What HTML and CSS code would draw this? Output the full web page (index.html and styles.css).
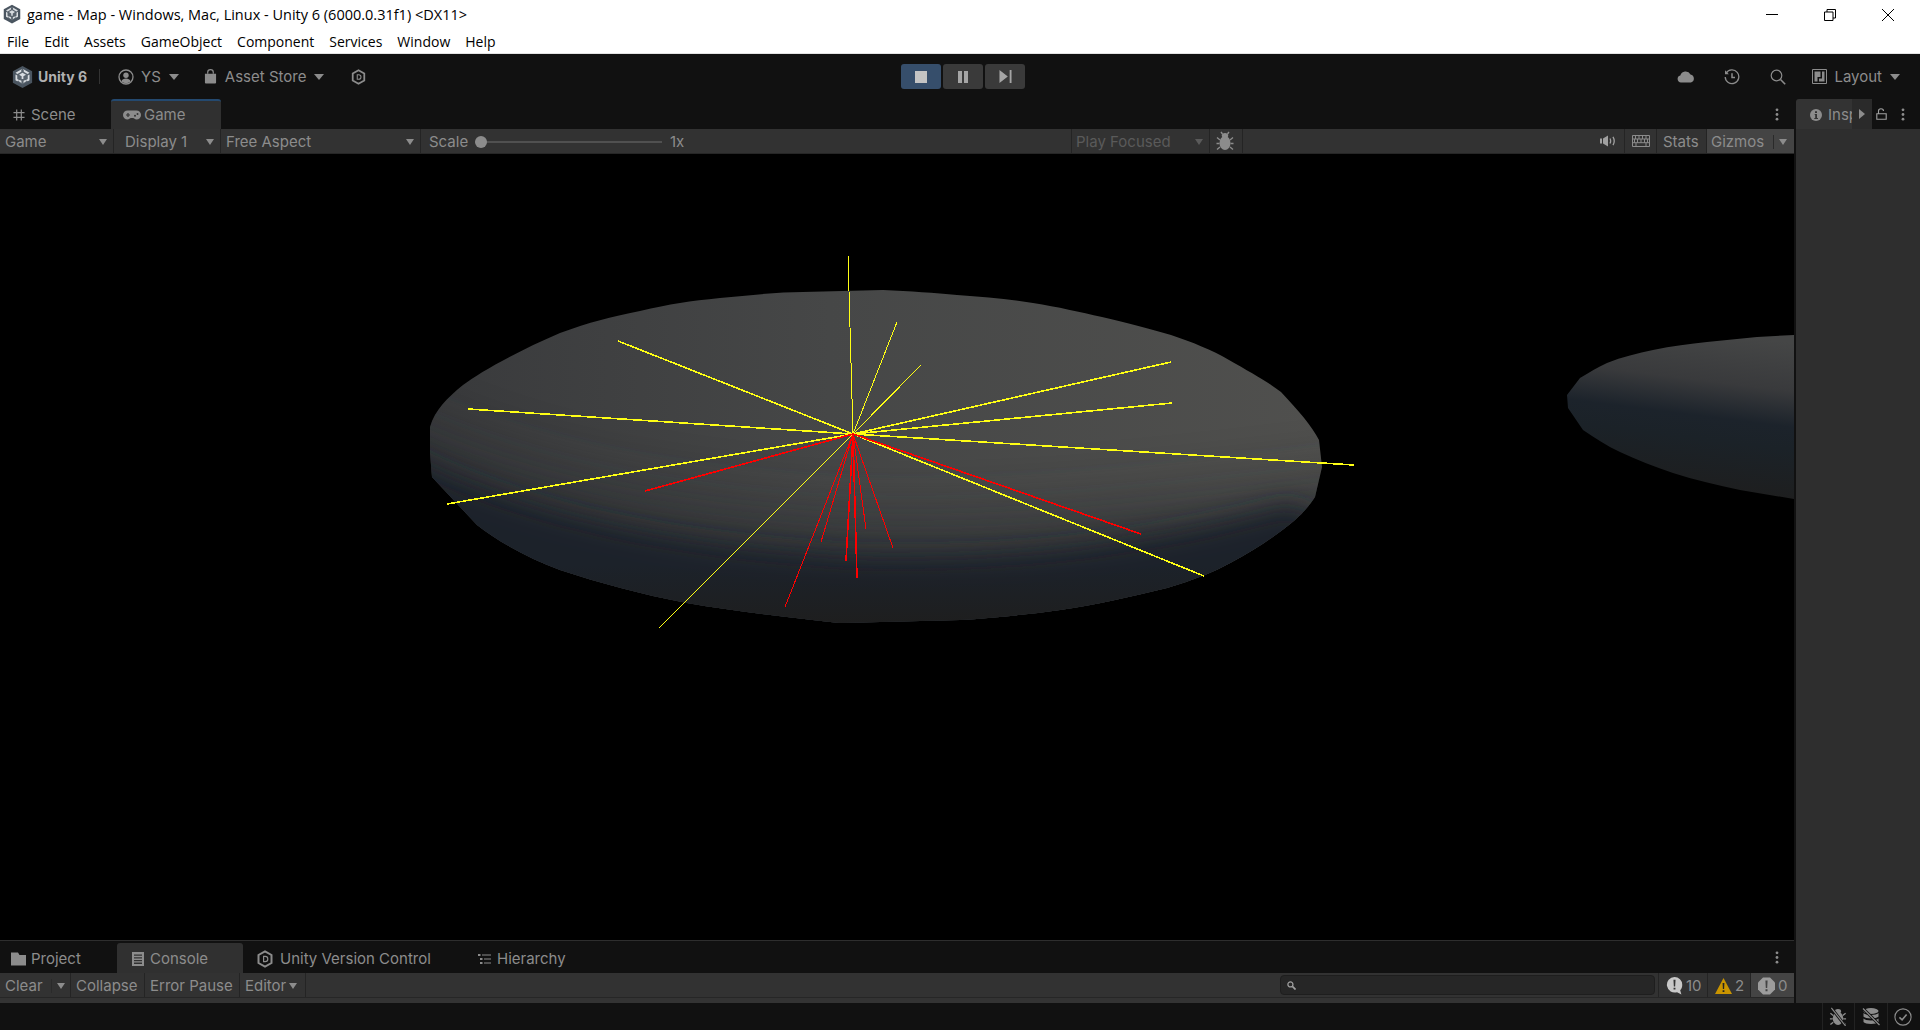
FILE: index.html
```html
<!DOCTYPE html>
<html lang="en">
<head>
  <meta charset="UTF-8" />
  <title>game - Map - Unity 6</title>
  <link rel="stylesheet" href="styles.css">
</head>
<body>
  <svg class="defs" width="0" height="0">
    <symbol id="i-unity" viewBox="0 0 24 26">
      <path d="M12 0.500 23 6.500V19.500L12 25.500 1 19.500V6.500Z" fill="#4a5560"/>
      <path d="M12 4.500 19.500 8.800V17.200L12 21.500 4.500 17.200V8.800Z" fill="#59636d"/>
      <path d="M12 3.500 20 8.200 17.800 9.600 13.400 7V4.900ZM12 3.500 4 8.200 6.200 9.600 10.600 7V4.900ZM4 10 6 11.200V15.300L8 16.500 6 17.800 4 16.600ZM20 10 18 11.200V15.300L16 16.500 18 17.800 20 16.600ZM10.800 19.700V17.400L8.800 16.300 7 17.400 12 20.800 17 17.400 15.200 16.300 13.200 17.400V19.700L12 21Z M8 10.300 12 8 16 10.300 13 12.200V15.200H11V12.200Z" fill="#d9dde1"/>
    </symbol>
    <symbol id="i-user" viewBox="0 0 16 16">
      <circle cx="8" cy="8" r="7" fill="none" stroke="currentColor" stroke-width="1.300"/>
      <circle cx="8" cy="6.200" r="2.700" fill="currentColor"/>
      <path d="M3.400 12.600C4 10.300 6 9.600 8 9.600S12 10.300 12.600 12.600A7 7 0 0 1 3.400 12.600Z" fill="currentColor"/>
    </symbol>
    <symbol id="i-bag" viewBox="0 0 14 16">
      <path d="M1 5H13V14.500A1 1 0 0 1 12 15.500H2A1 1 0 0 1 1 14.500Z" fill="currentColor"/>
      <path d="M4 5V3.300A3 2.600 0 0 1 10 3.300V5" fill="none" stroke="currentColor" stroke-width="1.300"/>
    </symbol>
    <symbol id="i-hexd" viewBox="0 0 16 18">
      <path d="M8 1.300 14.500 5V13L8 16.700 1.500 13V5Z" fill="none" stroke="currentColor" stroke-width="2"/>
      <path fill-rule="evenodd" d="M6 5.800H8.200A3.200 3.200 0 0 1 8.200 12.200H6ZM7.200 7V11H8.200A2 2 0 0 0 8.200 7Z" fill="currentColor"/>
    </symbol>
    <symbol id="i-grid" viewBox="0 0 13 13">
      <path d="M4 0.500V12.500M9 0.500V12.500M0.500 4H12.500M0.500 9H12.500" fill="none" stroke="currentColor" stroke-width="1.300"/>
    </symbol>
    <symbol id="i-pad" viewBox="0 0 18 10">
      <path d="M4.500 0.500H13.500A4.500 4.500 0 0 1 13.500 9.500C11.800 9.500 11.300 8 10 8H8C6.700 8 6.200 9.500 4.500 9.500A4.500 4.500 0 0 1 4.500 0.500Z" fill="currentColor"/>
      <path d="M3 5H7M5 3V7" stroke="#333" stroke-width="1.200"/>
      <circle cx="12" cy="5.800" r="1" fill="#333"/><circle cx="14.500" cy="4" r="1" fill="#333"/>
    </symbol>
    <symbol id="i-bug" viewBox="0 0 18 20">
      <ellipse cx="9" cy="12" rx="5.500" ry="7" fill="currentColor"/>
      <ellipse cx="9" cy="4.500" rx="3.200" ry="2.500" fill="currentColor"/>
      <path d="M4 9 1 6.500M14 9 17 6.500M3.500 12.500H0.500M14.500 12.500H17.500M4 16 1 18.500M14 16 17 18.500M6.500 3 5 1M11.500 3 13 1" stroke="currentColor" stroke-width="1.400" fill="none"/>
    </symbol>
    <symbol id="i-cloud" viewBox="0 0 18 13">
      <path d="M4 12.500A3.500 3.500 0 0 1 3.300 5.600 5.500 5.500 0 0 1 13.500 4.400 4.200 4.200 0 0 1 14 12.500Z" fill="currentColor"/>
    </symbol>
    <symbol id="i-history" viewBox="0 0 16 16">
      <path d="M2.200 4.200A6.800 6.800 0 1 1 1.200 8" fill="none" stroke="currentColor" stroke-width="1.300"/>
      <path d="M1 1.300V5.200H4.900Z" fill="currentColor"/>
      <path d="M8 4.200V8.400H11" fill="none" stroke="currentColor" stroke-width="1.500"/>
    </symbol>
    <symbol id="i-search" viewBox="0 0 16 16">
      <circle cx="6.500" cy="6.500" r="5.300" fill="none" stroke="currentColor" stroke-width="1.200"/>
      <path d="M10.500 10.500 15.200 15.200" stroke="currentColor" stroke-width="1.600"/>
    </symbol>
    <symbol id="i-layout" viewBox="0 0 15 15">
      <path d="M0.500 0.500H14.500V14.500H0.500Z" fill="none" stroke="currentColor"/>
      <path d="M2.500 2.500H8.500V8H5.500V12.500H2.500ZM10 2.500H12.500V12.500H7V9.500H10Z" fill="currentColor"/>
    </symbol>
    <symbol id="i-dots" viewBox="0 0 4 14">
      <circle cx="2" cy="2" r="1.500" fill="currentColor"/><circle cx="2" cy="7" r="1.500" fill="currentColor"/><circle cx="2" cy="12" r="1.500" fill="currentColor"/>
    </symbol>
    <symbol id="i-info" viewBox="0 0 12 12">
      <circle cx="6" cy="6" r="6" fill="currentColor"/>
      <path d="M5 2.200H7V4H5ZM4.700 5H7V9H8V10H4.300V9H5.200V6H4.700Z" fill="#333"/>
    </symbol>
    <symbol id="i-lock" viewBox="0 0 11 12">
      <path d="M0.800 5.800H10.200V11.300H0.800ZM2.500 5.800V3A2.500 2.300 0 0 1 7.500 3" fill="none" stroke="currentColor" stroke-width="1.100"/>
    </symbol>
    <symbol id="i-speaker" viewBox="0 0 16 12">
      <path d="M0 3.500H2V8.500H0ZM3 3.500 8 0.500V11.500L3 8.500Z" fill="currentColor"/>
      <path d="M10 3.500Q11.300 6 10 8.500M13 1.800Q15.500 6 13 10.200" fill="none" stroke="currentColor" stroke-width="1.300"/>
    </symbol>
    <symbol id="i-keys" viewBox="0 0 18 12">
      <path d="M0.500 0.500H17.500V11.500H0.500ZM0.500 4H17.500M0.500 7.700H17.500M3.500 0.500V4M7 0.500V4M10.500 0.500V4M14 0.500V4M2.500 4V7.700M5.500 4V7.700M9 4V7.700M12.500 4V7.700M15.500 4V7.700M4 7.700V11.500M14 7.700V11.500" fill="none" stroke="currentColor" stroke-width="1"/>
    </symbol>
    <symbol id="i-folder" viewBox="0 0 15 14">
      <path d="M0 0.500H7L8.500 3H15V13.500H0Z" fill="currentColor"/>
    </symbol>
    <symbol id="i-doc" viewBox="0 0 12 14">
      <path fill-rule="evenodd" d="M0 0H12V14H0ZM2 2.500V3.800H10V2.500ZM2 5.200V6.500H10V5.200ZM2 7.900V9.200H10V7.900ZM2 10.600V11.900H10V10.600Z" fill="currentColor"/>
    </symbol>
    <symbol id="i-tree" viewBox="0 0 13 12">
      <path d="M0 1H2.500V3H0ZM4 1.500H13V2.500H4ZM2 5H4.500V7H2ZM6 5.500H13V6.500H6ZM2 9H4.500V11H2ZM6 9.500H13V10.500H6Z" fill="currentColor"/>
    </symbol>
    <symbol id="i-magnify" viewBox="0 0 10 10">
      <circle cx="3.800" cy="3.800" r="2.800" fill="none" stroke="currentColor" stroke-width="1.400"/>
      <path d="M6 6 9.500 9.500" stroke="currentColor" stroke-width="1.800"/>
    </symbol>
    <symbol id="i-msg" viewBox="0 0 17 19">
      <path d="M8.500 0A8.200 8.200 0 0 1 16.700 8.200C16.700 10.800 15.800 12.800 14.500 14.100L15.800 18.500 11.200 16A8.200 8.200 0 1 1 8.500 0Z" fill="#c8c8c8"/>
      <path d="M7.400 3H9.600L9.200 10H7.800ZM7.500 11.300H9.500V13.300H7.500Z" fill="#333"/>
    </symbol>
    <symbol id="i-warn" viewBox="0 0 17 16">
      <path d="M8.500 0 17 16H0Z" fill="#c99400"/>
      <path d="M7.600 5H9.400L9.100 11H7.900ZM7.600 12.200H9.400V14H7.600Z" fill="#222"/>
    </symbol>
    <symbol id="i-err" viewBox="0 0 17 17">
      <path d="M5 0H12L17 5V12L12 17H5L0 12V5Z" fill="#9c9c9c"/>
      <path d="M7.400 3H9.600L9.200 10.500H7.800ZM7.500 11.800H9.500V13.800H7.500Z" fill="#444"/>
    </symbol>
    <symbol id="i-bugoff" viewBox="0 0 18 20">
      <ellipse cx="9" cy="12" rx="5.500" ry="7" fill="currentColor"/>
      <ellipse cx="9" cy="4.500" rx="3.200" ry="2.500" fill="currentColor"/>
      <path d="M4 9 1 6.500M14 9 17 6.500M3.500 12.500H0.500M14.500 12.500H17.500M4 16 1 18.500M14 16 17 18.500" stroke="currentColor" stroke-width="1.400" fill="none"/>
      <path d="M2 1 16 19" stroke="#111" stroke-width="3"/><path d="M2 1 17 20" stroke="currentColor" stroke-width="1.200"/>
    </symbol>
    <symbol id="i-db" viewBox="0 0 18 18">
      <ellipse cx="9" cy="3.500" rx="7.500" ry="3" fill="currentColor"/>
      <path d="M1.500 5.500C3 8 15 8 16.500 5.500V9C15 11.500 3 11.500 1.500 9ZM1.500 11C3 13.500 15 13.500 16.500 11V14.500C15 17 3 17 1.500 14.500Z" fill="currentColor"/>
      <path d="M1 1 17 17" stroke="#111" stroke-width="3"/><path d="M1 1 17.500 17.500" stroke="currentColor" stroke-width="1.200"/>
    </symbol>
    <symbol id="i-check" viewBox="0 0 16 16">
      <circle cx="8" cy="8" r="7.200" fill="none" stroke="currentColor" stroke-width="1"/>
      <path d="M4.800 8.300 7.200 10.500 11.200 5.800" fill="none" stroke="currentColor" stroke-width="1.400"/>
    </symbol>
  </svg>

  <div class="window">
    <header class="titlebar">
      <div class="title-row">
        <svg class="app-icon"><use href="#i-unity"/></svg>
        <span class="title-text">game - Map - Windows, Mac, Linux - Unity 6 (6000.0.31f1) &lt;DX11&gt;</span>
        <div class="win-controls">
          <svg class="win-btn" viewBox="0 0 12 12"><path d="M0 5.500H12" stroke="#000" fill="none"/></svg>
          <svg class="win-btn" viewBox="0 0 12 12"><path d="M0.500 3H9V11.500H0.500ZM3 3V0.500H11.500V9H9" stroke="#000" fill="none"/></svg>
          <svg class="win-btn" viewBox="0 0 12 12"><path d="M0 0 12 12M12 0 0 12" stroke="#000" fill="none"/></svg>
        </div>
      </div>
      <nav class="menu-row">
        <span>File</span><span>Edit</span><span>Assets</span><span>GameObject</span><span>Component</span><span>Services</span><span>Window</span><span>Help</span>
      </nav>
    </header>

    <div class="maintoolbar">
      <div class="mt-left">
        <svg class="mt-logo"><use href="#i-unity"/></svg>
        <span class="mt-brand">Unity 6</span>
        <span class="mt-sep"></span>
        <svg class="mt-user"><use href="#i-user"/></svg>
        <span class="mt-ys">YS</span>
        <i class="arrow mt-arrow"></i>
        <svg class="mt-bag"><use href="#i-bag"/></svg>
        <span class="mt-store">Asset Store</span>
        <i class="arrow mt-arrow"></i>
        <svg class="mt-hex"><use href="#i-hexd"/></svg>
      </div>
      <div class="play-group">
        <button class="play-btn active"><b class="ic-stop"></b></button>
        <button class="play-btn"><b class="ic-pause"></b></button>
        <button class="play-btn"><svg class="ic-step" viewBox="0 0 13 14"><path d="M0 0 9 7 0 14ZM11 0H13V14H11Z" fill="currentColor"/></svg></button>
      </div>
      <div class="mt-right">
        <svg class="mt-cloud"><use href="#i-cloud"/></svg>
        <svg class="mt-history"><use href="#i-history"/></svg>
        <svg class="mt-search"><use href="#i-search"/></svg>
        <svg class="mt-layout"><use href="#i-layout"/></svg>
        <span class="mt-layout-text">Layout</span>
        <i class="arrow mt-arrow"></i>
      </div>
    </div>

    <div class="workspace">
      <div class="left-col">
        <div class="tabbar">
          <div class="tab scene-tab"><svg class="tab-ic13"><use href="#i-grid"/></svg>Scene</div>
          <div class="tab tab-active game-tab"><svg class="tab-pad"><use href="#i-pad"/></svg>Game</div>
          <svg class="tab-dots"><use href="#i-dots"/></svg>
        </div>

        <div class="toolbar">
          <div class="cell c-game">Game<i class="arrow"></i></div>
          <div class="cell c-display"><span class="indent">Display 1</span><i class="arrow"></i></div>
          <div class="cell c-aspect">Free Aspect<i class="arrow"></i></div>
          <div class="scale-cell">
            <span class="scale-label">Scale</span>
            <div class="slider"><b class="thumb"></b></div>
            <span class="scale-value">1x</span>
          </div>
          <div class="cell faded">Play Focused<i class="arrow"></i></div>
          <div class="cell icon-cell c-bug"><svg class="ic-bug"><use href="#i-bug"/></svg></div>
          <div class="fill"></div>
          <div class="cell icon-cell c-icon"><svg class="ic-speaker"><use href="#i-speaker"/></svg></div>
          <div class="cell icon-cell c-icon"><svg class="ic-keys"><use href="#i-keys"/></svg></div>
          <div class="cell c-stats">Stats</div>
          <div class="gizmos">Gizmos<span class="gizmo-sep"></span><i class="arrow"></i></div>
        </div>

        <div class="gameview">
          <svg class="scene" width="1794" height="786" viewBox="0 154 1794 786">
            <defs>
              <linearGradient id="top-light" x1="0" y1="0" x2="1" y2="0">
                <stop offset="0" stop-color="#393a3c"/>
                <stop offset="0.45" stop-color="#464747"/>
                <stop offset="1" stop-color="#50504e"/>
              </linearGradient>
              <linearGradient id="bottom-grey" x1="0" y1="0" x2="0" y2="1">
                <stop offset="0" stop-color="#1e1e1e" stop-opacity="0"/>
                <stop offset="1" stop-color="#1e1e1e"/>
              </linearGradient>
              <linearGradient id="side-band" gradientUnits="userSpaceOnUse" x1="1690" y1="330" x2="1670" y2="490">
                <stop offset="0" stop-color="#454646"/>
                <stop offset="0.3" stop-color="#393a3c"/>
                <stop offset="0.52" stop-color="#1c232b"/>
                <stop offset="0.66" stop-color="#1b2228"/>
                <stop offset="1" stop-color="#1e1e1e"/>
              </linearGradient>
              <clipPath id="disc-a"><path d="M430 427C435 410 447 398 463 385 480 372 520 350 560 333 590 322 610 317 640 311 670 304 690 301 720 298 750 295 780 292 803 292L883 290C910 291 935 293 957 295 985 297 1010 299 1033 303 1058 307 1080 312 1102 317 1128 323 1150 329 1171 335 1192 342 1212 350 1229 360 1250 372 1268 382 1281 392 1298 410 1312 426 1319 440L1322 467 1315 497C1310 505 1303 513 1295 520 1283 530 1268 541 1253 550 1238 559 1222 568 1205 575 1192 580 1180 584 1167 588 1130 597 1095 605 1060 610 1025 615 990 618 960 620L840 623C820 621 805 619 787 617 755 613 720 609 687 603 640 594 600 583 560 570 530 559 500 543 477 525L432 477 430 453Z"/></clipPath>
              <clipPath id="disc-b"><path d="M1567 395 1580 378C1590 372 1598 367 1607 363 1622 357 1638 353 1653 350 1672 346 1690 344 1707 342L1757 337 1794 335V499L1740 490C1717 485 1695 480 1673 473 1655 467 1637 460 1620 452 1607 446 1595 438 1583 430L1568 408Z"/></clipPath>
              <filter id="blur-xl" filterUnits="userSpaceOnUse" x="300" y="200" width="1200" height="600"><feGaussianBlur stdDeviation="32"/></filter>
              <filter id="blur-lg" filterUnits="userSpaceOnUse" x="300" y="200" width="1200" height="600"><feGaussianBlur stdDeviation="13"/></filter>
            </defs>

            <g clip-path="url(#disc-a)">
              <rect x="420" y="285" width="910" height="345" fill="url(#top-light)"/>
              <path d="M350 400C500 480 660 510 850 520 1040 525 1180 505 1400 480V720H350Z" fill="#2c2e32" opacity="0.75" filter="url(#blur-xl)"/>
              <path d="M380 440C500 510 660 545 850 556 1040 562 1180 535 1290 505L1400 560V700H380Z" fill="#1c232b" filter="url(#blur-lg)"/>
              <rect x="420" y="565" width="910" height="60" fill="url(#bottom-grey)"/>
            </g>

            <g clip-path="url(#disc-b)">
              <rect x="1560" y="330" width="240" height="175" fill="url(#side-band)"/>
            </g>

            <g class="rays-yellow">
              <line class="ray-thin" x1="853" y1="434" x2="848" y2="255"/>
              <line class="ray-thin" x1="853" y1="434" x2="897" y2="322"/>
              <line class="ray-thin" x1="853" y1="434" x2="921" y2="365"/>
              <line x1="853" y1="434" x2="1171" y2="362"/>
              <line x1="853" y1="434" x2="1172" y2="403"/>
              <line x1="853" y1="434" x2="1354" y2="465"/>
              <line x1="853" y1="434" x2="1204" y2="576"/>
              <line x1="853" y1="434" x2="618" y2="341"/>
              <line x1="853" y1="434" x2="468" y2="409"/>
              <line x1="853" y1="434" x2="447" y2="504"/>
              <line class="ray-thin" x1="853" y1="434" x2="659" y2="628"/>
            </g>
            <g class="rays-red">
              <line x1="853" y1="434" x2="645" y2="491"/>
              <line class="ray-thin" x1="853" y1="434" x2="785" y2="607"/>
              <line class="ray-thin" x1="853" y1="434" x2="821" y2="542"/>
              <line x1="853" y1="434" x2="846" y2="561"/>
              <line x1="853" y1="434" x2="857" y2="578"/>
              <line class="ray-thin" x1="853" y1="434" x2="866" y2="529"/>
              <line class="ray-thin" x1="853" y1="434" x2="893" y2="548"/>
              <line x1="853" y1="434" x2="1141" y2="534"/>
            </g>
          </svg>
        </div>

        <div class="bottom-tabs">
          <div class="btab project-tab"><svg class="ic-folder"><use href="#i-folder"/></svg>Project</div>
          <div class="btab btab-active console-tab"><svg class="ic-doc"><use href="#i-doc"/></svg>Console</div>
          <div class="btab uvc-tab"><svg class="ic-hex"><use href="#i-hexd"/></svg>Unity Version Control</div>
          <div class="btab hier-tab"><svg class="ic-tree"><use href="#i-tree"/></svg>Hierarchy</div>
          <svg class="tab-dots"><use href="#i-dots"/></svg>
        </div>

        <div class="console-bar">
          <div class="ccell cc-clear">Clear<span class="clear-sep"></span><i class="arrow"></i></div>
          <div class="ccell cc-collapse">Collapse</div>
          <div class="ccell cc-pause">Error Pause</div>
          <div class="ccell cc-editor">Editor<i class="arrow arrow-tight"></i></div>
          <div class="fill"></div>
          <div class="search-box"><svg class="ic-magnify"><use href="#i-magnify"/></svg></div>
          <div class="count count-log"><svg class="ic-count"><use href="#i-msg"/></svg>10</div>
          <div class="count count-warn"><svg class="ic-count"><use href="#i-warn"/></svg>2</div>
          <div class="count count-on"><svg class="ic-count"><use href="#i-err"/></svg>0</div>
        </div>
        <div class="strip"></div>
      </div>

      <aside class="right-col">
        <div class="insp-tabs">
          <div class="insp-tab"><svg class="ic-info"><use href="#i-info"/></svg><span class="insp-name">Inspector</span></div>
          <div class="insp-more"><b class="tri-right"></b></div>
          <svg class="ic-lock"><use href="#i-lock"/></svg>
          <svg class="tab-dots insp-dots"><use href="#i-dots"/></svg>
        </div>
      </aside>
    </div>

    <footer class="statusbar">
      <div class="status-cell"><svg class="ic-status"><use href="#i-bugoff"/></svg></div>
      <div class="status-cell"><svg class="ic-status"><use href="#i-db"/></svg></div>
      <div class="status-cell"><svg class="ic-status-check"><use href="#i-check"/></svg></div>
    </footer>
  </div>
</body>
</html>
```

FILE: styles.css
```css
* {
  box-sizing: border-box;
}

html, body {
  margin: 0;
  height: 100%;
  overflow: hidden;
}

body {
  font-family: Inter, "Liberation Sans", sans-serif;
  font-size: 15px;
  background: #111;
  color: #8c8c8c;
}

.defs {
  position: absolute;
}

.window {
  display: flex;
  flex-direction: column;
  width: 1920px;
  height: 1030px;
}

.fill {
  flex: 1;
}

.arrow {
  display: block;
  flex: none;
  width: 0;
  height: 0;
  border-left: 5px solid transparent;
  border-right: 5px solid transparent;
  border-top: 6px solid #8c8c8c;
}

/* title bar */
.titlebar {
  height: 54px;
  flex: none;
  background: #fff;
  border-bottom: 1px solid #e3e3e3;
  color: #000;
  font-family: "Open Sans", "Liberation Sans", sans-serif;
  font-size: 14px;
}

.title-row {
  display: flex;
  align-items: center;
  height: 29px;
  padding-left: 3px;
}

.app-icon {
  width: 18px;
  height: 20px;
  margin-top: -1px;
}

.title-text {
  margin-left: 6px;
  font-size: 14.500px;
}

.win-controls {
  display: flex;
  margin-left: auto;
  padding-right: 26px;
  gap: 46px;
}

.win-btn {
  width: 12px;
  height: 12px;
}

.menu-row {
  display: flex;
  height: 24px;
  padding-left: 7px;
  gap: 15px;
  align-items: center;
}

/* main toolbar */
.maintoolbar {
  display: flex;
  align-items: center;
  height: 45px;
  flex: none;
  background: #111;
}

.maintoolbar svg {
  flex: none;
}

.mt-left {
  display: flex;
  align-items: center;
  width: 901px;
  flex: none;
}

.mt-right {
  display: flex;
  align-items: center;
  margin-left: auto;
  padding-right: 20px;
}

.mt-logo {
  width: 21px;
  height: 24px;
  margin-left: 12px;
}

.mt-brand {
  margin-left: 5px;
  font-size: 14px;
  font-weight: 700;
  color: #b0b0b0;
}

.mt-sep {
  width: 1px;
  height: 15px;
  margin-left: 12px;
  background: #333;
}

.mt-user {
  width: 16px;
  height: 16px;
  margin-left: 18px;
}

.mt-ys {
  margin-left: 7px;
}

.mt-arrow {
  margin-left: 8px;
}

.mt-bag {
  width: 13px;
  height: 15px;
  margin-left: 25px;
}

.mt-store {
  margin-left: 8px;
}

.mt-hex {
  width: 15px;
  height: 16px;
  margin-left: 27px;
}

.play-group {
  display: flex;
  gap: 2px;
}

.play-btn {
  display: flex;
  align-items: center;
  justify-content: center;
  width: 40px;
  height: 25px;
  padding: 0;
  border: none;
  border-radius: 3px;
  background: #3a3a3a;
  color: #a5a5a5;
}

.play-btn.active {
  background: #364e6b;
  color: #c4c4c4;
}

.ic-stop {
  width: 12px;
  height: 12px;
  background: currentColor;
}

.ic-pause {
  width: 10px;
  height: 12px;
  border-left: 4px solid currentColor;
  border-right: 4px solid currentColor;
}

.ic-step {
  width: 13px;
  height: 13px;
}

.mt-cloud {
  width: 18px;
  height: 13px;
}

.mt-history {
  width: 16px;
  height: 16px;
  margin-left: 29px;
}

.mt-search {
  width: 16px;
  height: 16px;
  margin-left: 30px;
}

.mt-layout {
  width: 15px;
  height: 15px;
  margin-left: 26px;
}

.mt-layout-text {
  margin-left: 7px;
}

/* panels */
.workspace {
  display: flex;
  flex: 1;
  min-height: 0;
}

.left-col {
  display: flex;
  flex-direction: column;
  width: 1794px;
  flex: none;
}

.tabbar {
  display: flex;
  align-items: stretch;
  height: 30px;
  flex: none;
  position: relative;
}

.tab {
  display: flex;
  align-items: center;
  height: 30px;
  padding-top: 1px;
}

.scene-tab {
  width: 111px;
  padding-left: 13px;
}

.tab-ic13 {
  width: 12px;
  height: 12px;
  margin-right: 6px;
}

.game-tab {
  width: 110px;
  padding-left: 12px;
  padding-top: 0;
  padding-bottom: 1px;
}

.tab-active {
  background: #303030;
  border-top: 2px solid #24496f;
  border-radius: 3px 3px 0 0;
}

.tab-pad {
  width: 18px;
  height: 10px;
  margin-right: 3px;
}

.tab-dots {
  position: absolute;
  top: 9px;
  right: 15px;
  width: 4px;
  height: 13px;
}

.toolbar {
  display: flex;
  height: 25px;
  flex: none;
  background: #323232;
  border-bottom: 1px solid #262626;
}

.cell {
  display: flex;
  align-items: center;
  justify-content: space-between;
  height: 24px;
  padding: 1px 6px 0 5px;
  border-right: 1px solid #242424;
}

.c-game {
  width: 114px;
}

.c-display {
  width: 107px;
}

.c-aspect {
  width: 200px;
}

.c-bug {
  width: 33px;
}

.c-icon {
  width: 32px;
}

.c-stats {
  width: 50px;
  padding-left: 6px;
}

.indent {
  margin-left: 6px;
}

.cell .arrow {
  border-left-width: 4.500px;
  border-right-width: 4.500px;
}

.faded {
  width: 139px;
  padding-left: 4px;
  color: #5a5a5a;
  border-left: 1px solid #242424;
}

.faded .arrow {
  border-top-color: #5a5a5a;
}

.icon-cell {
  justify-content: center;
  padding: 0;
}

.ic-bug {
  width: 18px;
  height: 20px;
  margin-right: 2px;
  color: #8c8c8c;
}

.ic-speaker {
  width: 16px;
  height: 12px;
  margin-right: 2px;
  color: #a0a0a0;
}

.ic-keys {
  width: 18px;
  height: 12px;
}

.scale-cell {
  display: flex;
  align-items: center;
  width: 650px;
  padding: 1px 0 0 8px;
}

.scale-label {
  width: 46px;
}

.slider {
  position: relative;
  width: 187px;
  height: 2px;
  background: #505050;
}

.scale-value {
  margin-left: 8px;
}

.thumb {
  position: absolute;
  top: -5px;
  left: 0;
  width: 12px;
  height: 12px;
  border-radius: 50%;
  background: #8c8c8c;
}

.gizmos {
  display: flex;
  align-items: center;
  width: 87px;
  height: 24px;
  padding: 1px 7px 0 4px;
  background: #444;
}

.gizmo-sep {
  width: 1px;
  height: 14px;
  margin: 0 5px 0 auto;
  background: #2a2a2a;
}

.gizmos .arrow {
  border-left-width: 4.500px;
  border-right-width: 4.500px;
}

.gameview {
  flex: 1;
  min-height: 0;
  background: #000;
}

.scene {
  display: block;
}

.rays-yellow line {
  stroke: #ffff14;
  stroke-width: 1.600;
  shape-rendering: crispEdges;
}

.rays-red line {
  stroke: #ff0000;
  stroke-width: 1.600;
  shape-rendering: crispEdges;
}

.rays-yellow .ray-thin,
.rays-red .ray-thin {
  stroke-width: 1;
}

/* console panel */
.bottom-tabs {
  display: flex;
  position: relative;
  align-items: flex-end;
  height: 33px;
  flex: none;
  background: #111;
  border-top: 1px solid #2e2e2e;
}

.btab {
  display: flex;
  align-items: center;
  height: 30px;
  padding-top: 1px;
}

.project-tab {
  width: 117px;
  padding-left: 11px;
}

.btab-active {
  background: #303030;
  border-radius: 3px 3px 0 0;
}

.console-tab {
  width: 126px;
  padding-left: 15px;
}

.uvc-tab {
  width: 221px;
  padding-left: 14px;
}

.hier-tab {
  padding-left: 14px;
}

.ic-folder {
  width: 15px;
  height: 14px;
  margin-right: 5px;
}

.ic-doc {
  width: 12px;
  height: 14px;
  margin-right: 6px;
}

.ic-hex {
  width: 16px;
  height: 18px;
  margin-right: 7px;
}

.ic-tree {
  width: 13px;
  height: 12px;
  margin-right: 6px;
}

.bottom-tabs .tab-dots {
  top: 10px;
}

.console-bar {
  display: flex;
  height: 25px;
  flex: none;
  background: #323232;
  border-bottom: 1px solid #262626;
}

.ccell {
  display: flex;
  align-items: center;
  height: 24px;
  padding: 1px 0 0 5px;
  border-right: 1px solid #242424;
}

.cc-clear {
  width: 71px;
}

.cc-collapse {
  width: 74px;
}

.cc-pause {
  width: 95px;
}

.cc-editor {
  width: 66px;
}

.clear-sep {
  width: 1px;
  height: 14px;
  margin: 0 5px 0 8px;
  background: #2a2a2a;
}

.ccell .arrow {
  border-left-width: 4.500px;
  border-right-width: 4.500px;
}

.arrow-tight {
  margin-left: 3px;
}

.search-box {
  display: flex;
  align-items: center;
  width: 375px;
  height: 20px;
  margin: 2px 3px 0 0;
  padding-left: 6px;
  background: #262626;
  border: 1px solid #1e1e1e;
  border-radius: 4px;
}

.ic-magnify {
  width: 9px;
  height: 9px;
  color: #a0a0a0;
}

.count {
  display: flex;
  align-items: center;
  height: 24px;
  padding: 1px 0 0 7px;
  border-left: 1px solid #242424;
}

.count-log {
  width: 49px;
}

.count-warn {
  width: 43px;
}

.count-on {
  width: 44px;
  background: #444;
}

.ic-count {
  width: 17px;
  height: 18px;
  margin-right: 3px;
}

.strip {
  height: 5px;
  flex: none;
  background: #333;
}

/* inspector */
.right-col {
  flex: 1;
  background: #2e2e2e;
  border-left: 2px solid #111;
}

.insp-tabs {
  display: flex;
  position: relative;
  align-items: center;
  height: 30px;
  background: #111;
}

.insp-tab {
  display: flex;
  align-items: center;
  width: 56px;
  height: 30px;
  padding: 1px 0 0 14px;
  background: #333;
  border-radius: 3px 0 0 0;
  overflow: hidden;
  white-space: nowrap;
}

.ic-info {
  width: 12px;
  height: 12px;
  margin-right: 6px;
  flex: none;
}

.insp-more {
  display: flex;
  align-items: center;
  justify-content: center;
  width: 20px;
  height: 30px;
  background: #2a2a2a;
}

.tri-right {
  width: 0;
  height: 0;
  border-top: 5px solid transparent;
  border-bottom: 5px solid transparent;
  border-left: 6px solid #8c8c8c;
}

.ic-lock {
  width: 11px;
  height: 12px;
  margin-left: 4px;
  color: #a0a0a0;
}

.insp-dots {
  right: 15px;
}

/* status bar */
.statusbar {
  display: flex;
  justify-content: flex-end;
  align-items: center;
  height: 27px;
  flex: none;
  background: #111;
  padding-right: 1px;
}

.status-cell {
  display: flex;
  align-items: center;
  justify-content: center;
  width: 32.500px;
  height: 27px;
  border-left: 1px solid #222;
}

.ic-status {
  width: 18px;
  height: 19px;
  color: #8c8c8c;
}

.ic-status-check {
  width: 18px;
  height: 18px;
  color: #8c8c8c;
}
```
